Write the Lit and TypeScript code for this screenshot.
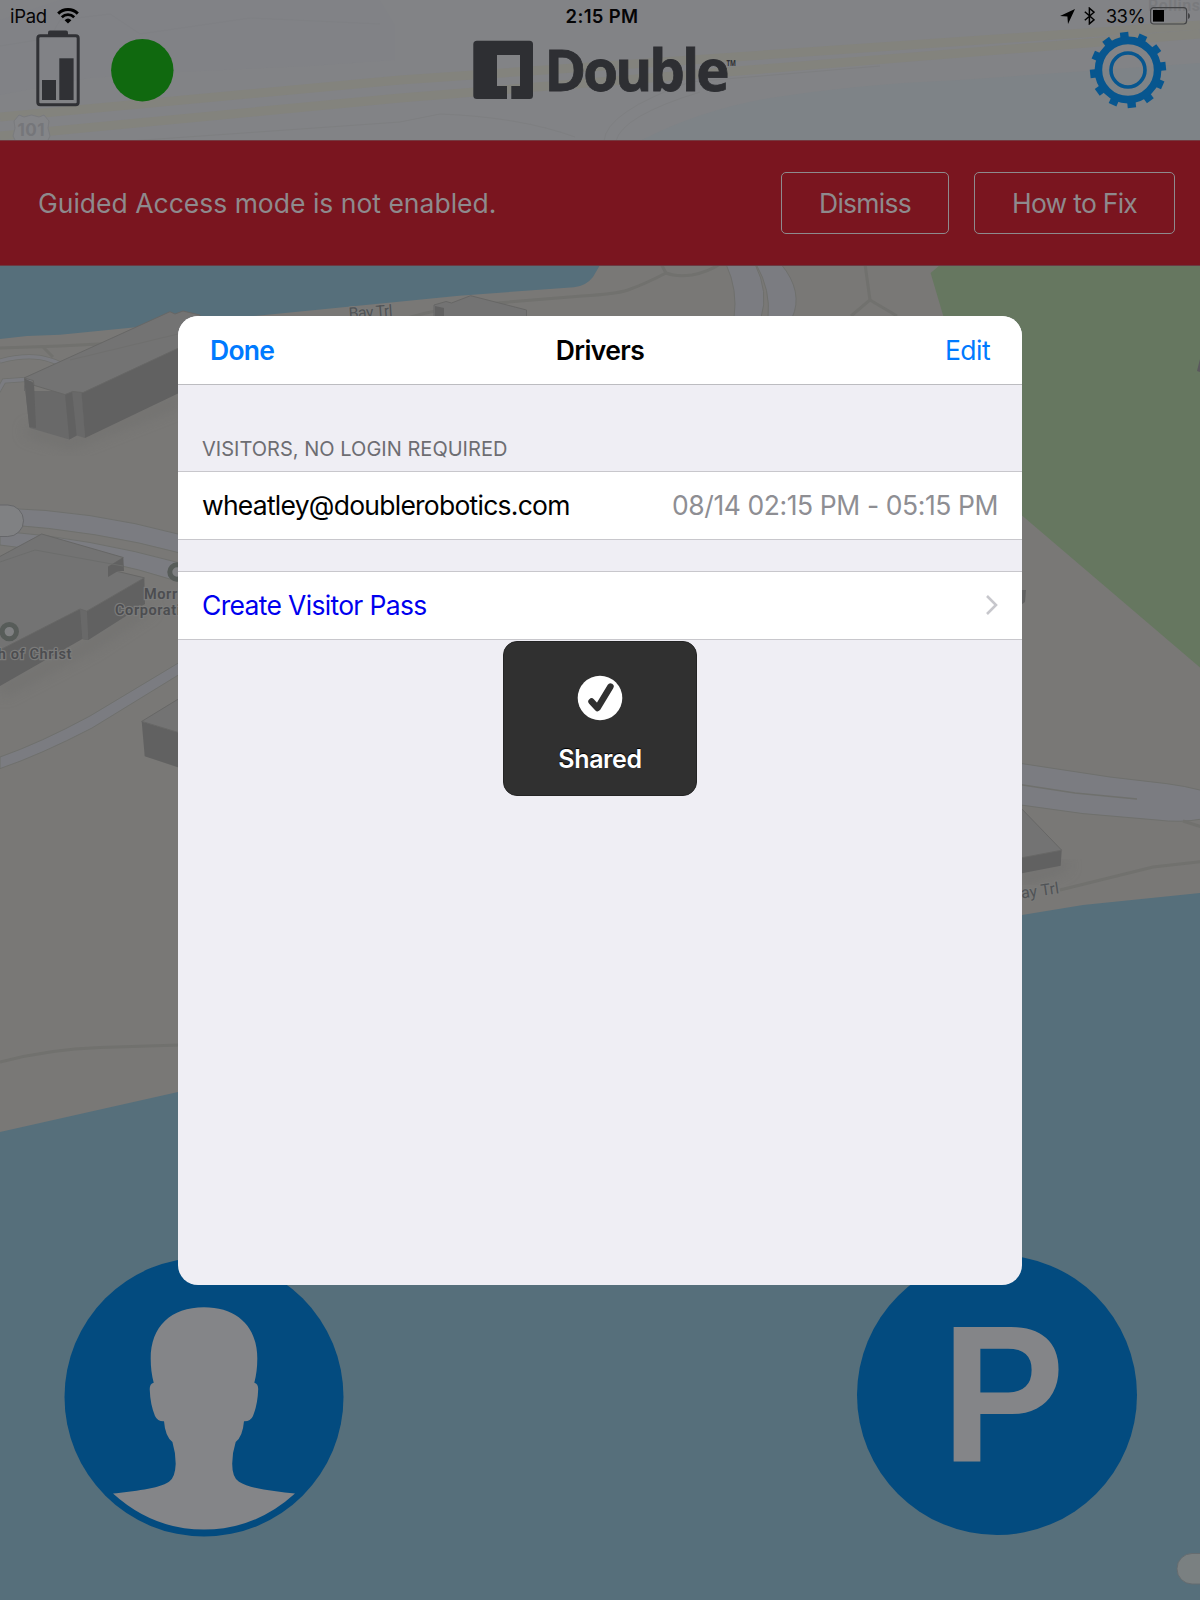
import { LitElement, html, css, svg } from "lit";
import { customElement } from "lit/decorators.js";

const GEAR_TEETH = Array.from({ length: 12 }, (_, i) => i * 30 - 6);

@customElement("map-view")
class MapView extends LitElement {
  static styles = css`
    :host { display: block; width: 1200px; height: 1600px; }
    svg { display: block; }
    .land { fill: #797876; }
    .water { fill: #566f7b; }
    .park { fill: #667760; }
    .road { fill: #7b7c81; stroke: #6f706d; stroke-width: 1; }
    .trail { fill: none; stroke: #71716e; stroke-width: 3; }
    .roof { fill: #737373; stroke: #676766; stroke-width: 1; }
    .side { fill: #616161; }
    .front { fill: #696969; }
    .shade { fill: none; stroke: #6a6a69; stroke-width: 10; opacity: 0.5; }
    .label { font: 600 14.5px Roboto, sans-serif; fill: #4c4d50; stroke: #7b7b7a; stroke-width: 2.5px; paint-order: stroke; letter-spacing: 0.6px; }
    .trail-label { font: 400 16px Roboto, sans-serif; fill: #505356; stroke: #7b7b7a; stroke-width: 2px; paint-order: stroke; }
    .marker { fill: #7f8082; stroke: #575c59; stroke-width: 5; }
    .pill { fill: #808183; stroke: #66676a; stroke-width: 1; }
    .pill-dim { fill: #7a8081; stroke: #656c70; stroke-width: 1; }
  `;
  render() {
    return html`<svg width="1200" height="1600" viewBox="0 0 1200 1600">
      <defs>
        <filter id="soft" x="-30%" y="-30%" width="160%" height="160%"><feGaussianBlur stdDeviation="7" /></filter>
      </defs>
      <rect class="land" width="1200" height="1600" />
      <path class="water" d="M0 339L27 336L60 334.7L133 327.5L275 314L459 295.7L574 287.3Q586 286 593 277L600 265V140H0Z" />
      <path class="park" d="M940 265L930.6 273L943 315L1022 515.4L1200 667.6V140H940Z" />
      <path class="water" d="M0 1132L178 1092L1022 915L1083 905L1200 893V1600H0Z" />

      <path class="trail" d="M400 320Q450 305 497 303L582 296Q616 294 628 290Q645 284 666 273L660 262M666 273Q676 277 692 275Q708 272 720 264" />
      <path class="trail" d="M865 264L870 300L851 316M870 300L897 316" />
      <path class="road" d="M726 264Q738 290 734 318H761Q769 292 755 264Z" />
      <path class="road" d="M756 264Q771 290 768 318H792Q804 292 781 264Z" />
      <path class="roof" d="M434 320V305L446 301.5L451.5 303L470.6 295.7L526.5 310V320Z" />
      <path class="side" d="M435 306L444 308V320H435Z" />

      <path class="trail" d="M0 348L60 346L178 340M42 346L53 357" />
      <path d="M0 361Q30 353 50 360Q72 366 60 377L4 381L-4 395" fill="none" stroke="#6f706d" stroke-width="5" />
      <path d="M0 361Q30 353 50 360Q72 366 60 377L4 381L-4 395" fill="none" stroke="#7b7c81" stroke-width="3.5" />

      <path class="shade" d="M26 430L70 443L180 400" filter="url(#soft)" />
      <path class="front" d="M24 378L29.3 427.7L69.3 439.4L76.7 435.6L85 438L82 391H24Z" />
      <path class="side" d="M65 394L72 391L76.7 435.6L69.3 439.4Z M81.5 392L178 348V393.6L85 438Z M24 378L34 383L36 428L29.3 427Z" />
      <path class="roof" d="M24 378L170 311.7L175 314L183 311L200 315V338L83 392.6L72.7 391.5L65 394.6L34 385.3L33.3 380.5Z" />
      <path d="M70 360L178 334" stroke="#6f6f6e" fill="none" />

      <path class="road" d="M0 508Q90 510 180 534.5V553Q100 531 0 524Z" />
      <path class="road" d="M0 531Q90 538 180 563V582Q100 556 0 545Z" />
      <path class="road" d="M0 757Q40 743 90 716L180 662V674L92 728Q40 755 0 768.6Z" />
      <rect class="pill" x="-30" y="505" width="53.5" height="31.5" rx="15.7" />

      <path class="shade" d="M0 692L90 645L150 606" filter="url(#soft)" />
      <path class="side" d="M0 649L80 609L87 611L144.3 577.8L145 604L88.3 640L82.3 639L0 686Z" />
      <path class="roof" d="M-2 557.5L41.7 534L123.3 557.5L108 567L118.3 571.6L144.3 577.8L86.7 611.2L80 609L-2 651Z" />
      <path class="side" d="M123.3 557.5L124 571L118 571L108 577V567Z" />
      <path class="front" d="M80 609L87 611.5L88.3 640L82.3 639Z" />
      <path d="M0 562L35 550L123 566" stroke="#6c6d6c" fill="none" />

      <path class="side" d="M141.7 721.4L180 733V768L144.7 756.2Z" />
      <path class="roof" d="M141.7 721.4L180 698V733Z" />

      <circle class="marker" cx="9.3" cy="631.6" r="7.2" />
      <circle class="marker" cx="177" cy="572" r="7.2" />
      <text class="label" x="144" y="599">Morris</text>
      <text class="label" x="115" y="615">Corporation</text>
      <text class="label" x="72" y="659" text-anchor="end">Church of Christ</text>
      <text class="trail-label" x="349" y="319" transform="rotate(-4 349 319)" textLength="44">Bay Trl</text>

      <path class="trail" d="M0 1062Q50 1049 100 1047.5L180 1045" stroke-width="4" />

      <path class="side" d="M1018 590L1026 590L1025 602L1018 607Z" />
      <path class="road" d="M1018 763L1110 777L1167 783.7Q1185 786 1202 790.5V819Q1180 823 1157 820L1083 813.6L1018 804.6Z" />
      <path d="M1018 784.2L1075 793L1137 799" stroke="#6f706d" fill="none" stroke-width="1.5" />
      <path class="trail" d="M1183 821L1202 827" />
      <path class="shade" d="M1020 880L1068 864" filter="url(#soft)" />
      <path class="side" d="M1018 858L1061.7 850.2L1060.7 865.8L1018 874Z" />
      <path class="roof" d="M1018 805L1061.7 850.2L1018 858.5Z" />
      <path class="trail" d="M1060 890L1153 867L1202 861.5" />
      <text class="trail-label" x="1012" y="900" transform="rotate(-8 1012 900)" textLength="48">Bay Trl</text>
      <path d="M1197 371L1200 359V372Z" fill="#5b595e" />
      <rect class="pill-dim" x="1177" y="1553.5" width="60" height="30.5" rx="15" />
    </svg>`;
  }
}

@customElement("status-bar")
class StatusBar extends LitElement {
  static styles = css`
    :host { display: grid; grid-template-columns: 1fr auto 1fr; height: 30px; padding: 0 10px 0 10px; color: #050506; font: 400 18.5px/32px Inter, sans-serif; }
    .left, .right { display: flex; align-items: center; height: 32px; }
    .right { justify-content: flex-end; }
    .time { font-weight: 600; letter-spacing: 0.35px; padding-left: 4px; }
    .wifi { margin-left: 10px; }
    .carrier { letter-spacing: -0.3px; }
    .location { margin-right: 9px; }
    .bluetooth { margin-right: 11px; }
    .percent { letter-spacing: -0.6px; margin-right: 5px; }
    svg { display: block; }
  `;
  render() {
    return html`
      <div class="left">
        <span class="carrier">iPad</span>
        <svg class="wifi" width="22" height="16" viewBox="0 0 22 16">
          <path d="M1.2 5.6A14 14 0 0 1 20.8 5.6" fill="none" stroke="#000" stroke-width="3" />
          <path d="M4.8 9.2A9 9 0 0 1 17.2 9.2" fill="none" stroke="#000" stroke-width="2.8" />
          <path d="M7.6 12.2A5 5 0 0 1 14.4 12.2L11 15.6Z" fill="#000" />
        </svg>
      </div>
      <span class="time">2:15 PM</span>
      <div class="right">
        <svg class="location" width="15" height="15" viewBox="0 0 15 15"><path d="M15 0L8 15L7.4 7.4L0 7Z" fill="#000" /></svg>
        <svg class="bluetooth" width="11" height="18" viewBox="0 0 11 18"><path d="M0.8 4.8L10 12.8L5.4 16.8V1.2L10 5.2L0.8 13.2" fill="none" stroke="#000" stroke-width="1.5" /></svg>
        <span class="percent">33%</span>
        <svg width="40" height="18" viewBox="0 0 40 18">
          <rect x="0.6" y="0.6" width="36" height="16.4" rx="3" fill="none" stroke="#434446" stroke-width="1.2" />
          <rect x="3" y="3" width="11" height="11.6" fill="#000" />
          <path d="M38 6Q40 6.5 40 9T38 12Z" fill="#434446" />
        </svg>
      </div>
    `;
  }
}

@customElement("top-bar")
class TopBar extends LitElement {
  static styles = css`
    :host { display: block; position: relative; height: 140px; background: #828386; overflow: hidden; }
    .backdrop { position: absolute; inset: 0; }
    .content { position: relative; }
    .row { display: grid; grid-template-columns: 1fr auto 1fr; padding: 0 33px 0 36px; }
    .left { display: flex; gap: 31px; }
    .right { display: flex; justify-content: flex-end; }
    .shield { font: 700 17px Inter, sans-serif; fill: #75767a; }
    .street { font: 600 16px Roboto, sans-serif; fill: #797a7d; letter-spacing: 0.5px; }
    .brand { margin-left: 6px; }
    .word { font: 700 57px "Open Sans", sans-serif; letter-spacing: -3px; fill: #2e2f33; stroke: #2e2f33; stroke-width: 0.8px; }
    .tm { font: 700 8px "Open Sans", sans-serif; fill: #2e2f33; }
    svg { display: block; }
  `;
  render() {
    return html`
      <svg class="backdrop" width="1200" height="140" viewBox="0 0 1200 140">
        <path d="M0 20L60 0H380L395 25V60L310 66L180 72L90 78L0 95Z" fill="#818286" />
        <path d="M0 46L50 38L60 20L110 14L140 34L250 18L380 24" fill="none" stroke="#7f8084" stroke-width="1" />
        <path d="M0 117L400 80L1200 25" fill="none" stroke="#83837d" stroke-width="9" />
        <path d="M0 136L400 98L1200 34" fill="none" stroke="#83837d" stroke-width="9" />
        <path d="M640 141Q700 110 770 98Q860 84 960 80L1200 63V141Z" fill="#7e8387" />
        <path d="M130 141L400 122L440 114Q520 117 575 137M604 141Q606 112 690 82L880 66M616 141Q622 116 700 92" fill="none" stroke="#7e7f81" />
        <path d="M14 121L19 115L24 117L31.500 115L39 117L44 115L49 121L48 128L50 136L46 144H17L13 136L15 128Z" fill="#848588" stroke="#7a7b7e" />
        <text class="shield" x="17.500" y="136" textLength="27">101</text>
        <text class="street" x="1148" y="11">Rollins</text>
      </svg>
      <div class="content">
        <status-bar></status-bar>
        <div class="row">
          <div class="left">
            <svg width="44" height="77" viewBox="0 0 44 77">
              <rect x="12" y="0.500" width="20" height="6" rx="2" fill="#303135" />
              <rect x="1.800" y="5.800" width="40.400" height="69" rx="2.500" fill="none" stroke="#303135" stroke-width="3" />
              <rect x="6" y="50" width="14" height="20" fill="#303135" />
              <rect x="23.300" y="28.300" width="14.300" height="41.700" fill="#303135" />
            </svg>
            <svg width="63" height="77" viewBox="0 0 63 77"><circle cx="31.300" cy="40.200" r="31.200" fill="#10690f" /></svg>
          </div>
          <svg class="brand" width="266" height="77" viewBox="0 0 266 77">
            <path d="M5 10.700H57.500Q61 10.700 61 14.200V65.500Q61 69 57.500 69H39.300V56H48V25H25V56H35V69H5Q1.300 69 1.300 65.500V14.200Q1.300 10.700 5 10.700Z" fill="#2e2f33" />
            <text class="word" x="72.500" y="61.300" textLength="182" lengthAdjust="spacingAndGlyphs">Double</text>
            <text class="tm" x="254.500" y="35.500" textLength="9.500" lengthAdjust="spacingAndGlyphs">TM</text>
          </svg>
          <div class="right">
            <svg width="78" height="80" viewBox="-39 -40 78 80">
              ${GEAR_TEETH.map((a) => svg`<rect x="-4.200" y="-38" width="8.400" height="8" fill="#07568f" transform="rotate(${a})" />`)}
              <circle r="29.600" fill="none" stroke="#07568f" stroke-width="7.600" />
              <circle r="17" fill="none" stroke="#07568f" stroke-width="3.600" />
            </svg>
          </div>
        </div>
      </div>
    `;
  }
}

@customElement("alert-banner")
class AlertBanner extends LitElement {
  static styles = css`
    :host { display: flex; align-items: center; gap: 25px; box-sizing: border-box; height: 125.500px; padding: 0 25px 0 38px; background: #7a151f; border-top: 1px solid #74393f; border-bottom: 1px solid #6b3a42; color: #8e8a8d; font: 400 26.500px/32px Inter, sans-serif; }
    .message { flex: 1; letter-spacing: 0; }
    .button { box-sizing: border-box; height: 62px; padding: 0; border: 1.500px solid #8e8a8d; border-radius: 5px; background: none; color: inherit; font: inherit; letter-spacing: -0.750px; }
    .dismiss { width: 168px; }
    .fix { width: 201px; }
  `;
  render() {
    return html`
      <span class="message">Guided Access mode is not enabled.</span>
      <button class="button dismiss">Dismiss</button>
      <button class="button fix">How to Fix</button>
    `;
  }
}

@customElement("drivers-sheet")
class DriversSheet extends LitElement {
  static styles = css`
    :host { display: flex; flex-direction: column; box-sizing: border-box; overflow: hidden; border-radius: 20px; background: #efeef4; font: 400 26.500px/32px Inter, sans-serif; color: #000; }
    .nav { display: grid; grid-template-columns: 1fr auto 1fr; align-items: center; box-sizing: border-box; height: 69.500px; padding: 0 32px; background: #fff; border-bottom: 1.500px solid #bcbcc0; }
    .link { color: #007aff; }
    .done { font-weight: 600; letter-spacing: -0.750px; }
    .edit { text-align: right; letter-spacing: -0.550px; }
    .title { font-weight: 600; letter-spacing: -0.620px; }
    .section { padding: 51px 24px 9px; height: 26px; font-size: 20px; line-height: 26px; color: #6d6d72; letter-spacing: 0.020px; }
    .row { display: flex; align-items: center; justify-content: space-between; box-sizing: border-box; height: 69px; padding: 0 24px 2px; background: #fff; border-top: 1px solid #c8c7cc; border-bottom: 1px solid #c8c7cc; }
    .name { letter-spacing: -0.750px; }
    .time { color: #8e8e93; letter-spacing: -0.420px; }
    .create { margin-top: 31px; }
    .create .name { color: #0000ee; letter-spacing: -0.680px; }
  `;
  render() {
    return html`
      <div class="nav">
        <span class="link done">Done</span>
        <span class="title">Drivers</span>
        <span class="link edit">Edit</span>
      </div>
      <div class="section">VISITORS, NO LOGIN REQUIRED</div>
      <div class="row">
        <span class="name">wheatley@doublerobotics.com</span>
        <span class="time">08/14 02:15 PM - 05:15 PM</span>
      </div>
      <div class="row create">
        <span class="name">Create Visitor Pass</span>
        <svg width="13" height="22" viewBox="0 0 13 22"><path d="M2 2L11 11L2 20" fill="none" stroke="#c7c7cc" stroke-width="2.600" /></svg>
      </div>
    `;
  }
}

@customElement("shared-hud")
class SharedHud extends LitElement {
  static styles = css`
    :host { display: flex; flex-direction: column; align-items: center; box-sizing: border-box; padding-top: 32.500px; border-radius: 14px; background: #303030; border: 1px solid #242424; color: #fff; font: 600 25px/32px Inter, sans-serif; text-shadow: 0 -1px 1px #000; }
    .text { margin-top: 22.500px; letter-spacing: -0.400px; }
  `;
  render() {
    return html`
      <svg width="46" height="46" viewBox="-23 -23 46 46">
        <circle r="22.300" fill="#fff" />
        <path d="M-8.500 3.500L-2.500 10L10.500 -11.500" fill="none" stroke="#303030" stroke-width="6.400" stroke-linecap="round" stroke-linejoin="round" />
      </svg>
      <span class="text">Shared</span>
    `;
  }
}

@customElement("app-root")
class AppRoot extends LitElement {
  static styles = css`
    :host { display: flex; flex-direction: column; position: relative; width: 1200px; height: 1600px; overflow: hidden; background: #797876; }
    .map { position: absolute; inset: 0; }
    .top, .banner { position: relative; flex: none; }
    .actions { position: relative; display: flex; justify-content: space-between; align-items: flex-start; margin-top: auto; padding: 0 63px 65px 63.500px; }
    .avatar { display: block; margin-bottom: -1.500px; margin-top: 1.500px; }
    .park { display: flex; align-items: center; justify-content: center; width: 280px; height: 280px; border-radius: 50%; background: #034b7f; }
    .letter { font: 700 195px/280px "Liberation Sans", sans-serif; color: #848588; transform: translate(6px, -2px) scaleX(0.95); }
    .sheet { position: absolute; left: 178px; top: 315.500px; width: 844px; height: 969px; }
    .hud { position: absolute; left: 503px; top: 641px; width: 194px; height: 155px; }
  `;
  render() {
    return html`
      <map-view class="map"></map-view>
      <top-bar class="top"></top-bar>
      <alert-banner class="banner"></alert-banner>
      <div class="actions">
        <svg class="avatar" width="280" height="280" viewBox="63.300 1256.300 280 280">
          <circle cx="203.300" cy="1396.300" r="139.500" fill="#034b7f" />
          <path d="M203.300 1306.500C170 1306.500 150 1326 150 1357.800Q150 1371 153 1382Q149 1383 149 1388.400Q149.500 1404 154.300 1415.200Q157 1421 163.300 1420.600Q164.500 1436 171.700 1441.200Q175 1452 175 1463Q174.500 1477 168.300 1481C158 1488 132 1490.500 112.300 1492.900Q152 1528.900 203.300 1528.900T294.300 1492.900C274.600 1490.500 248.600 1488 238.300 1481Q231.500 1477 231.500 1463Q231.500 1452 235 1441.200Q242 1436 243.300 1420.600Q249.600 1421 252.300 1415.200Q257 1404 257.500 1388.400Q257.500 1383 253.600 1382Q256.600 1371 256.600 1357.800C256.600 1326 236.600 1306.500 203.300 1306.500Z" fill="#848588" />
        </svg>
        <div class="park"><span class="letter">P</span></div>
      </div>
      <drivers-sheet class="sheet"></drivers-sheet>
      <shared-hud class="hud"></shared-hud>
    `;
  }
}
